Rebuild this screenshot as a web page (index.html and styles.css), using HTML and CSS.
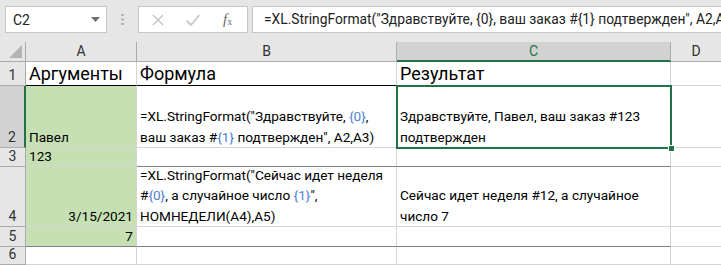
FILE: index.html
```html
<html>
  <head>
    <meta charset="utf-8">
    <link rel="stylesheet" href="styles.css">
  </head>
  <body>
    <!-- formula bar -->
    <div class="formula-bar">
      <div class="name-box">
        <span>C2</span>
        <svg class="drop" width="9" height="5" viewBox="0 0 9 5"><path d="M0 0H9L4.5 5Z" fill="#6f6f6f"/></svg>
      </div>
      <div class="grip">
        <svg width="3" height="11" viewBox="0 0 3 11"><rect x="0" y="0" width="3" height="2" fill="#b3b3b3"/><rect x="0" y="4.5" width="3" height="2" fill="#b3b3b3"/><rect x="0" y="9" width="3" height="2" fill="#b3b3b3"/></svg>
      </div>
      <div class="fx-box">
        <svg class="ico" width="14" height="14" viewBox="0 0 14 14"><path d="M2 2L12 12M12 2L2 12" stroke="#c8c8c8" stroke-width="1.6" fill="none"/></svg>
        <svg class="ico" width="16" height="14" viewBox="0 0 16 14"><path d="M1.5 7.5L6 12L14.5 2" stroke="#c8c8c8" stroke-width="1.8" fill="none"/></svg>
        <span class="fx"><i>f</i><sub>x</sub></span>
      </div>
      <div class="formula-input">=XL.StringFormat("Здравствуйте, {0}, ваш заказ #{1} подтвержден", A2,A3)</div>
    </div>

    <!-- sheet grid -->
    <div class="sheet">
      <div class="corner"><svg width="13" height="13" viewBox="0 0 13 13"><path d="M13 0V13H0Z" fill="#b4b4b4"/></svg></div>
      <div class="colhead">A</div>
      <div class="colhead">B</div>
      <div class="colhead active">C</div>
      <div class="colhead last">D</div>

      <div class="rowhead">1</div>
      <div class="cell big line-dark"><div>Аргументы</div></div>
      <div class="cell big line-dark"><div>Формула</div></div>
      <div class="cell big line-dark"><div>Результат</div></div>
      <div class="cell last"></div>

      <div class="rowhead active">2</div>
      <div class="cell green"><div>Павел</div></div>
      <div class="cell"><div>=XL.StringFormat("Здравствуйте, <span class="arg">{0}</span>,<br>ваш заказ #<span class="arg">{1}</span> подтвержден", A2,A3)</div></div>
      <div class="cell wrap"><div>Здравствуйте, Павел, ваш заказ #123 подтвержден</div></div>
      <div class="cell last"></div>

      <div class="rowhead">3</div>
      <div class="cell green"><div>123</div></div>
      <div class="cell line-grey"></div>
      <div class="cell line-grey"></div>
      <div class="cell last"></div>

      <div class="rowhead">4</div>
      <div class="cell green right"><div>3/15/2021</div></div>
      <div class="cell"><div>=XL.StringFormat("Сейчас идет неделя<br>#<span class="arg">{0}</span>, а случайное число <span class="arg">{1}</span>",<br>НОМНЕДЕЛИ(A4),A5)</div></div>
      <div class="cell wrap"><div>Сейчас идет неделя #12, а случайное число 7</div></div>
      <div class="cell last"></div>

      <div class="rowhead">5</div>
      <div class="cell green right line-grey"><div>7</div></div>
      <div class="cell line-grey"></div>
      <div class="cell line-grey"></div>
      <div class="cell last"></div>

      <div class="rowhead">6</div>
      <div class="cell"></div>
      <div class="cell"></div>
      <div class="cell"></div>
      <div class="cell last"></div>

      <!-- active cell frame -->
      <div class="selection"><div class="handle"></div></div>
    </div>
  </body>
</html>
```

FILE: styles.css
```css
*
{
   margin: 0;
   padding: 0;
   box-sizing: border-box;
}
body
{
   width: 721px;
   height: 265px;
   overflow: hidden;
   background-color: #e6e6e6;
   font-family: Roboto, "Liberation Sans", sans-serif;
   color: #000;
}
.formula-bar
{
   height: 42px;
   display: flex;
   align-items: flex-start;
   padding-top: 6px;
   padding-left: 5px;
}
.name-box
{
   width: 102px;
   height: 27px;
   background: #fff;
   border: 1px solid #c6c6c6;
   display: flex;
   align-items: center;
   justify-content: space-between;
   padding: 0 6px 0 7px;
   font-size: 14px;
   color: #222;
}
.grip
{
   width: 31px;
   height: 27px;
   display: flex;
   align-items: center;
   justify-content: center;
}
.fx-box
{
   width: 110px;
   height: 27px;
   background: #fff;
   border: 1px solid #c6c6c6;
   display: flex;
   align-items: center;
   padding-left: 12px;
   gap: 20px;
}
.fx
{
   font-family: "Liberation Serif", serif;
   font-size: 15px;
   color: #6a6a6a;
   margin-left: 2px;
}
.fx sub
{
   font-size: 10px;
   vertical-align: -1px;
}
.formula-input
{
   flex: 1;
   height: 27px;
   margin-left: 4px;
   background: #fff;
   border: 1px solid #c6c6c6;
   border-right: none;
   padding-left: 11px;
   font-size: 13.8px;
   line-height: 25px;
   white-space: nowrap;
   overflow: hidden;
   color: #222;
}
.sheet
{
   position: relative;
   display: grid;
   grid-template-columns: 26px 111px 260px 274px 1fr;
   grid-template-rows: 20px 24px 62px 19px 60px 20px 18px;
   background: #fff;
   font-family: Roboto, "Liberation Sans", sans-serif;
   font-size: 13.6px;
}
.corner
{
   background: #e6e6e6;
   border-right: 1px solid #ababab;
   border-bottom: 1px solid #ababab;
   display: flex;
   align-items: flex-end;
   justify-content: flex-end;
   padding: 0 3px 3px 0;
}
.colhead
{
   background: #e6e6e6;
   border-right: 1px solid #ababab;
   border-bottom: 1px solid #ababab;
   text-align: center;
   font-size: 14px;
   line-height: 19px;
   color: #333;
}
.colhead.active
{
   background: #d2d2d2;
   color: #217346;
   border-bottom: 2px solid #217346;
}
.colhead.last
{
   border-right: none;
}
.rowhead
{
   background: #e6e6e6;
   border-right: 1px solid #ababab;
   border-bottom: 1px solid #ababab;
   display: flex;
   align-items: flex-end;
   justify-content: center;
   font-size: 14px;
   line-height: 19px;
   color: #333;
}
.rowhead.active
{
   background: #d2d2d2;
   border-right: 2px solid #217346;
}
.cell
{
   border-right: 1px solid #d4d4d4;
   border-bottom: 1px solid #d4d4d4;
   padding: 0 3px 0 3px;
   display: flex;
   flex-direction: column;
   justify-content: flex-end;
   line-height: 20.4px;
   white-space: nowrap;
   overflow: hidden;
}
.cell.wrap
{
   white-space: normal;
}
.cell.last
{
   border-right: none;
}
.cell.big
{
   font-size: 18px;
   line-height: 23px;
}
.cell.green
{
   background: #c6e0b4;
}
.cell.right
{
   text-align: right;
}
.line-dark
{
   border-bottom-color: #000;
}
.line-grey
{
   border-bottom-color: #7f7f7f;
}
.arg
{
   color: #4f81d4;
}
.selection
{
   position: absolute;
   left: 396px;
   top: 43px;
   width: 276px;
   height: 64px;
   border: 2px solid #217346;
   pointer-events: none;
}
.handle
{
   position: absolute;
   right: -5px;
   bottom: -5px;
   width: 7px;
   height: 7px;
   background: #217346;
   border: 1px solid #fff;
}
```
